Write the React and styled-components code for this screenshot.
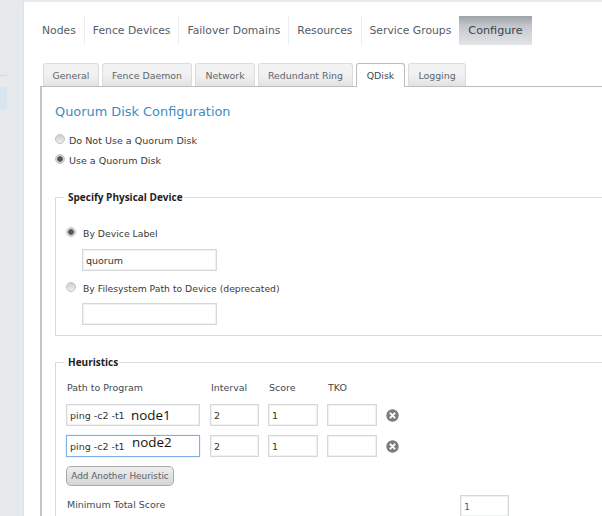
import React from 'react';
import styled, { createGlobalStyle } from 'styled-components';

const Global = createGlobalStyle`
  html, body { margin: 0; padding: 0; }
  body {
    background: #e7eaed;
    font-family: "DejaVu Sans", Verdana, sans-serif;
    font-size: 10px;
    color: #333;
  }
  * { box-sizing: border-box; }
`;

const Page = styled.div`
  display: flex;
  width: 602px;
  height: 516px;
  overflow: hidden;
`;

const Sidebar = styled.aside`
  width: 23px;
  flex: none;
  padding-top: 75px;
`;

const SideLine = styled.div`
  width: 7px;
  height: 1px;
  background: #d3d6d9;
  margin-bottom: 11px;
`;

const SideActive = styled.div`
  width: 7px;
  height: 23px;
  background: #d8e6f2;
  border-radius: 0 2px 2px 0;
`;

const Main = styled.main`
  flex: 1;
  min-width: 0;
  margin-top: 2px;
  padding: 14px 0 0 16px;
  background: #fff;
  border-left: 1px solid #dfe2e5;
`;

const Nav = styled.nav`
  display: flex;
  height: 29px;
  margin-bottom: 18px;
  padding-left: 2px;
`;

const NavItem = styled.div`
  display: flex;
  align-items: center;
  padding: ${p => (p.$first ? '0 8px 0 0' : p.$active ? '0 9px' : '0 8px')};
  font-size: ${p => (p.$active ? 11.2 : 10.8)}px;
  color: ${p => (p.$active ? '#3c444c' : '#555d64')};
  background: ${p => (p.$active ? 'linear-gradient(#9ea3a8, #c4c8cc 35%, #e2e5e7)' : 'none')};
  border-right: ${p => (p.$last ? 'none' : '1px solid #eceef0')};
`;

const TabBar = styled.div`
  display: flex;
  gap: 3px;
  height: 24px;
  padding-left: 3px;
`;

const Tab = styled.div`
  display: flex;
  align-items: center;
  justify-content: center;
  width: ${p => p.$w}px;
  height: ${p => (p.$active ? 24 : 23)}px;
  font-size: 9.4px;
  color: ${p => (p.$active ? '#3c4750' : '#5e666d')};
  background: ${p => (p.$active ? '#fff' : 'linear-gradient(#f3f3f3, #f1f1f1 50%, #e2e2e2)')};
  border: 1px solid ${p => (p.$active ? '#bcbcbc' : '#dcdcdc')};
  border-bottom: none;
  border-radius: 3px 3px 0 0;
  position: relative;
  z-index: 1;
`;

const Panel = styled.section`
  margin-top: -1px;
  border-top: 1px solid #bdbdbd;
  border-left: 2px solid #c4c4c4;
  padding: 16px 0 0 13px;
  height: 440px;
`;

const Title = styled.h2`
  margin: 0 0 9px;
  font-size: 12.9px;
  font-weight: 400;
  line-height: 18px;
  color: #3a8dc2;
`;

const RadioRow = styled.label`
  display: flex;
  align-items: center;
  height: 20px;
  margin-top: ${p => p.$top || 0}px;
  font-size: ${p => p.$fs || 9.55}px;
  color: #3a3a3a;
`;

const RadioDot = styled.span`
  width: 10px;
  height: 10px;
  flex: none;
  margin-right: ${p => p.$gap || 4}px;
  margin-top: -2px;
  border-radius: 50%;
  border: 1px solid #c2c2c2;
  background: ${p => (p.$on
    ? 'radial-gradient(circle, #555 0 2.4px, #d6d6d6 3.2px)'
    : 'linear-gradient(#cfcfcf, #efefef)')};
`;

const Fieldset = styled.fieldset`
  margin: ${p => p.$top}px -40px 0 0;
  padding: ${p => p.$pad};
  height: ${p => p.$h}px;
  border: 1px solid #d8dcdc;
  min-width: 0;
`;

const Legend = styled.legend`
  margin-left: -2px;
  padding: 0 1px 0 4px;
  font-family: "Open Sans", sans-serif;
  font-size: 10px;
  font-weight: 700;
  line-height: 12px;
  color: #222;
`;

const Input = styled.div`
  display: flex;
  align-items: center;
  width: ${p => p.$w}px;
  height: 22px;
  padding-left: 3px;
  flex: none;
  font-size: 9.5px;
  color: #333;
  background: #fff;
  border: ${p => (p.$focus ? '1px solid #7fb0e8' : '1px solid #d6d9d9')};
  box-shadow: ${p => (p.$focus ? '0 0 1px #9fc4f0' : 'inset 0 0 0 1px #f0f1f1')};
  position: relative;
`;

const LabelInput = styled(Input)`
  margin: ${p => p.$m};
`;

const Overlay = styled.span`
  position: absolute;
  left: ${p => p.$x}px;
  top: ${p => p.$y}px;
  font-family: "Open Sans", sans-serif;
  font-size: 13.4px;
  line-height: 14px;
  color: #111;
`;

const HeuGrid = styled.div`
  display: grid;
  grid-template-columns: 135px 49px 50px 50px 20px;
  column-gap: 9px;
  row-gap: 9px;
  align-items: center;
  justify-content: start;
`;

const ColHead = styled.div`
  font-size: 9.45px;
  color: #3f4a52;
  line-height: 12px;
  margin: 0 0 1px 1px;
`;

const Remove = styled.svg`
  width: 13px;
  height: 13px;
`;

const AddButton = styled.button`
  display: block;
  width: 108px;
  height: 20px;
  margin: 9px 0 0;
  padding: 0;
  font-family: inherit;
  font-size: 8.9px;
  color: #5b6268;
  background: linear-gradient(#eeeeee, #d6d6d6);
  border: 1px solid #a9a9a9;
  border-radius: 5px;
`;

const ScoreRow = styled.div`
  display: flex;
  justify-content: space-between;
  width: 443px;
  margin-top: 9px;
  font-size: 9.45px;
  color: #3f4a52;
`;

const ScoreLabel = styled.span`
  padding: 4px 0 0 1px;
`;

const ScoreInput = styled(Input)`
  color: #2a6aa8;
`;

const RemoveIcon = () => (
  <Remove viewBox="0 0 13 13">
    <circle cx="6.5" cy="6.5" r="6.2" fill="#7c7c7c" />
    <path d="M4.4 4.4l4.2 4.2M8.6 4.4l-4.2 4.2" stroke="#fff" strokeWidth="2" strokeLinecap="round" />
  </Remove>
);

const tabs = [
  ['General', 56],
  ['Fence Daemon', 90],
  ['Network', 60],
  ['Redundant Ring', 95],
  ['QDisk', 49],
  ['Logging', 58],
];

const navItems = ['Nodes', 'Fence Devices', 'Failover Domains', 'Resources', 'Service Groups'];

const rows = [
  { name: 'node1', x: 64, y: 3 },
  { name: 'node2', x: 65, y: -1, focus: true },
];

export default function App() {
  return (
    <Page>
      <Global />
      <Sidebar>
        <SideLine />
        <SideActive />
      </Sidebar>
      <Main>
        <Nav>
          {navItems.map((n, i) => (
            <NavItem key={n} $first={i === 0} $last={i === navItems.length - 1}>{n}</NavItem>
          ))}
          <NavItem $active $last>Configure</NavItem>
        </Nav>
        <TabBar>
          {tabs.map(([t, w]) => (
            <Tab key={t} $w={w} $active={t === 'QDisk'}>{t}</Tab>
          ))}
        </TabBar>
        <Panel>
          <Title>Quorum Disk Configuration</Title>
          <RadioRow><RadioDot />Do Not Use a Quorum Disk</RadioRow>
          <RadioRow><RadioDot $on />Use a Quorum Disk</RadioRow>

          <Fieldset $top={21} $h={145} $pad="20px 0 0 10px">
            <Legend>Specify Physical Device</Legend>
            <RadioRow $fs={9.3}><RadioDot $on $gap={7} />By Device Label</RadioRow>
            <LabelInput $w={135} $m="6px 0 0 16px">quorum</LabelInput>
            <RadioRow $fs={9.25} $top={7}><RadioDot $gap={7} />By Filesystem Path to Device (deprecated)</RadioRow>
            <LabelInput $w={135} $m="5px 0 0 16px" />
          </Fieldset>

          <Fieldset $top={20} $h={200} $pad="14px 0 0 10px">
            <Legend>Heuristics</Legend>
            <HeuGrid>
              <ColHead>Path to Program</ColHead>
              <ColHead>Interval</ColHead>
              <ColHead>Score</ColHead>
              <ColHead>TKO</ColHead>
              <span />
              {rows.map(r => (
                <React.Fragment key={r.name}>
                  <Input $w={134} $focus={r.focus}>
                    ping -c2 -t1
                    <Overlay $x={r.x} $y={r.y}>{r.name}</Overlay>
                  </Input>
                  <Input $w={49}>2</Input>
                  <Input $w={50}>1</Input>
                  <Input $w={50} />
                  <RemoveIcon />
                </React.Fragment>
              ))}
            </HeuGrid>
            <AddButton>Add Another Heuristic</AddButton>
            <ScoreRow>
              <ScoreLabel>Minimum Total Score</ScoreLabel>
              <ScoreInput $w={49}>1</ScoreInput>
            </ScoreRow>
          </Fieldset>
        </Panel>
      </Main>
    </Page>
  );
}
